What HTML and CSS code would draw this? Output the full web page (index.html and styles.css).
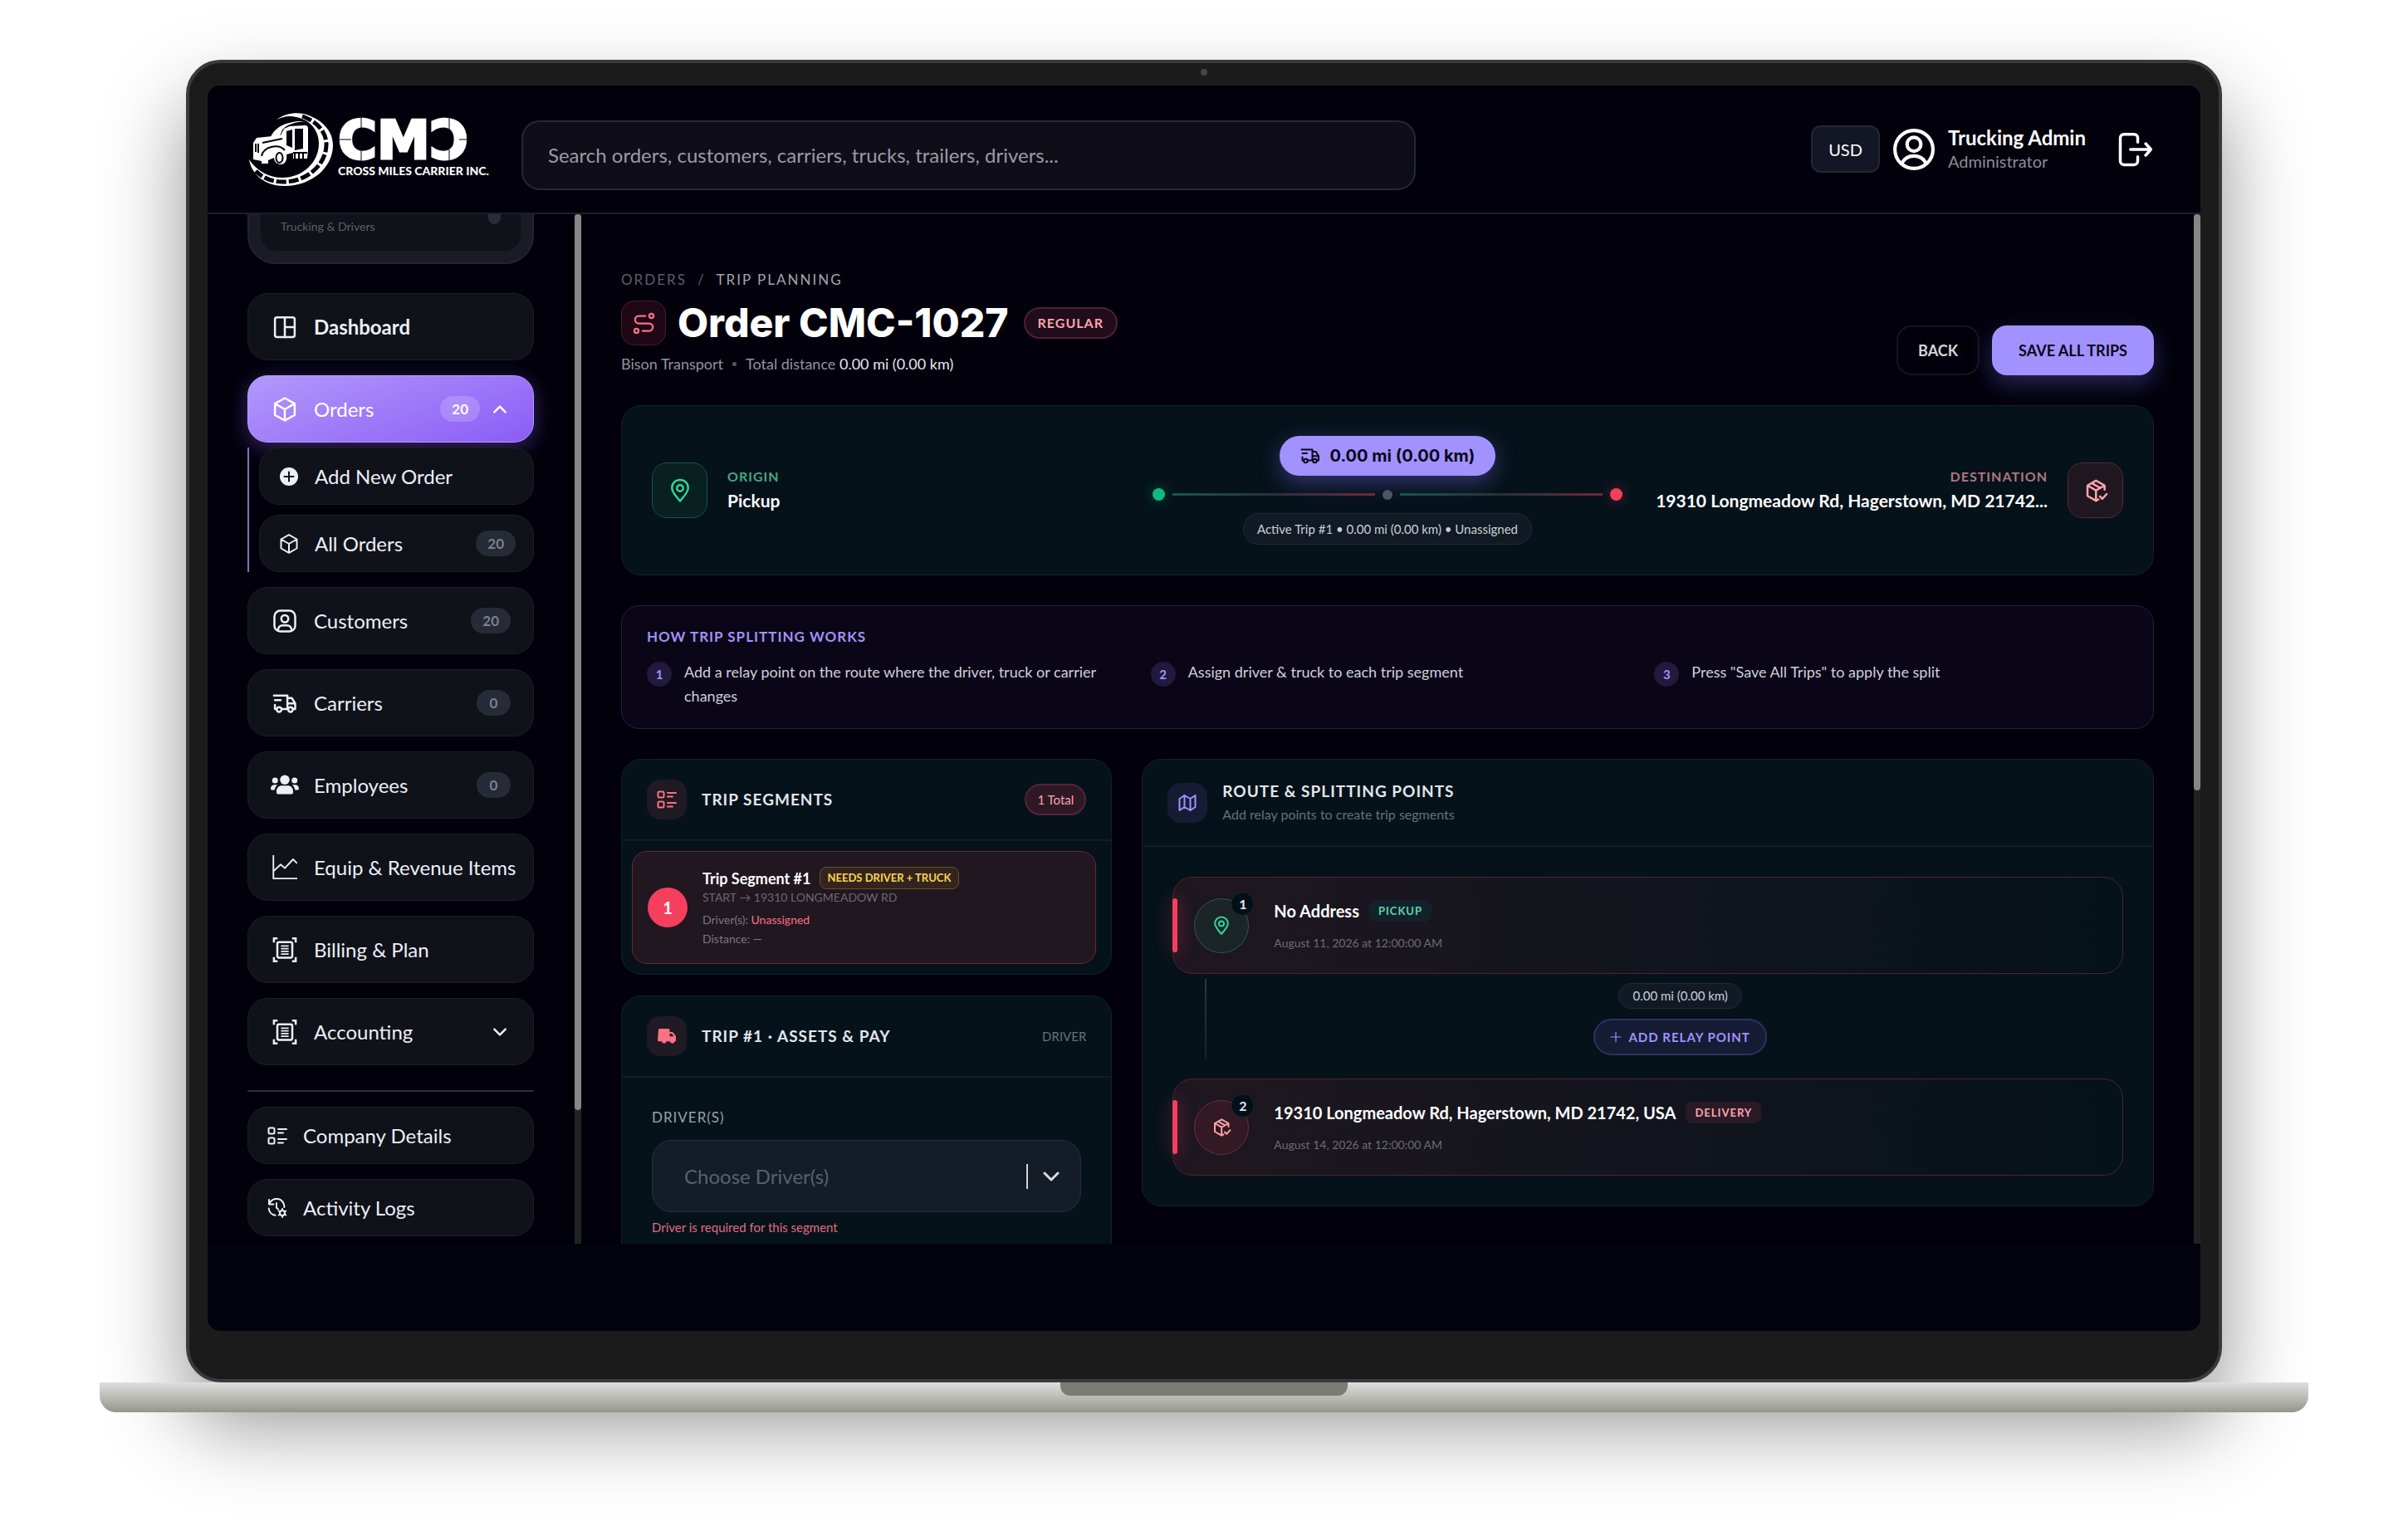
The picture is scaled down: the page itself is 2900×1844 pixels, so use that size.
FILE: index.html
```html
<!DOCTYPE html>
<html lang="en">

<head>
    <meta charset="UTF-8">
    <meta name="viewport" content="width=device-width, initial-scale=1.0">
    <title>Order CMC-1027 - Trip Planning</title>
    <link rel="stylesheet" href="styles.css">
</head>

<body>

    <!-- Icon set -->
    <svg class="icon-defs" aria-hidden="true">
        <symbol id="i-dashboard" viewBox="0 0 24 24"><rect x="2.500" y="2.500" width="19" height="19" rx="2"/><path d="M12 2.500v19M12 12h9.500"/></symbol>
        <symbol id="i-box" viewBox="0 0 24 24"><path d="M12 1.200l9.500 5.300v11l-9.500 5.300-9.500-5.300v-11zM2.500 6.500l9.500 5.500 9.500-5.500M12 12v10.800"/></symbol>
        <symbol id="i-user-square" viewBox="0 0 24 24"><rect x="2" y="2" width="20" height="20" rx="5.500"/><circle cx="12" cy="9.800" r="3.400"/><path d="M5.500 20.800c0-3 2-4.600 4.500-4.600h4c2.500 0 4.500 1.600 4.500 4.600"/></symbol>
        <symbol id="i-truck" viewBox="0 0 24 24"><path d="M1.500 4.500H14.500V17.500M14.500 7h4.200l3.300 5.200v5.300h-2.300M15.200 17.500H9M3.300 17.500H2.500V13.500M2.500 9h5.500M14.500 12.200H22"/><circle cx="6.500" cy="18" r="2.300"/><circle cx="17.500" cy="18" r="2.300"/></symbol>
        <symbol id="i-users" viewBox="0 0 28 24"><g fill="currentColor" stroke="none"><circle cx="14" cy="6.500" r="4.700"/><circle cx="4.300" cy="7" r="2.900"/><circle cx="23.700" cy="7" r="2.900"/><path d="M5.700 18.500c0-4 2.300-6.200 5.300-6.200h6c3 0 5.300 2.200 5.300 6.200 0 1.400-.7 2.200-2 2.200H7.700c-1.300 0-2-.8-2-2.200zM0 15.300c0-2.400 1.500-4 3.800-4h3c-1.700 1.300-2.600 3-2.900 5.200H1.200c-.8 0-1.200-.4-1.200-1.200zM28 15.300c0-2.400-1.500-4-3.800-4h-3c1.700 1.300 2.600 3 2.900 5.200h2.700c.8 0 1.200-.4 1.200-1.200z"/></g></symbol>
        <symbol id="i-chart" viewBox="0 0 24 24"><path d="M1 0v22.500h23M1 15.500l7-6.500 4 3.500 8-8.500 3.500 3.500"/></symbol>
        <symbol id="i-bill" viewBox="0 0 24 24"><path d="M1.500 5V1H5M19 1h3.500v4M22.500 19v4H19M5 23H1.500v-4" stroke-linecap="butt" stroke-linejoin="miter"/><rect x="4.800" y="4.500" width="14.400" height="15" rx="1.500"/><path d="M8.300 8.300h7.400M8.300 10.900h7.400M8.300 13.500h7.400M8.300 16.100h7.400" stroke-width="1.500" stroke-linecap="butt"/></symbol>
        <symbol id="i-list" viewBox="0 0 24 24"><rect x="1.500" y="2.500" width="7" height="7" rx="1.500"/><rect x="1.500" y="14.500" width="7" height="7" rx="1.500"/><path d="M13 4h10M13 8.500h6M13 16h10M13 20.500h6"/></symbol>
        <symbol id="i-history" viewBox="0 0 24 24"><path d="M2 2v5.500h5.500M2.200 7.300A9.300 9.300 0 0 1 20.300 11M1.700 12.500a9.300 9.300 0 0 0 7.800 8.300M11 6v5.500l2 2"/><circle cx="18" cy="18" r="3"/><path d="M18 13v2M18 21v2M22.300 15.500l-1.700 1M15.400 19.500l-1.700 1M13.700 15.500l1.700 1M20.600 19.500l1.700 1"/></symbol>
        <symbol id="i-route" viewBox="0 0 24 24"><circle cx="4" cy="20" r="2.300"/><circle cx="20" cy="4" r="2.300"/><path d="M10.500 20h7a4 4 0 0 0 0-8h-11a4 4 0 0 1 0-8h7"/></symbol>
        <symbol id="i-pin" viewBox="0 0 24 24"><path d="M12 22C8 17 4.200 13.500 4.200 9.300a7.800 7.800 0 0 1 15.600 0C19.800 13.500 16 17 12 22z"/><circle cx="12" cy="9.500" r="3"/></symbol>
        <symbol id="i-package" viewBox="0 0 24 24"><path d="M20.500 11V7l-8.300-4.700L4 7v10l8.200 4.700M4 7l8.200 4.700L20.500 7M12.200 11.700v10M8 4.700l8.300 4.700M12.200 21.700l2.300-1.300M16 17.500l2.300 2.300 4.200-4.600"/></symbol>
        <symbol id="i-map" viewBox="0 0 24 24"><path d="M2.500 7l6-4 7 4 6-4v14l-6 4-7-4-6 4zM8.500 3v14M15.500 7v14"/></symbol>
        <symbol id="i-truck-fill" viewBox="0 0 24 24"><path d="M2 4.500C2 3.700 2.700 3 3.500 3H14c.8 0 1.500.7 1.500 1.500V7h2.700c.6 0 1 .2 1.400.6l2.900 3.600c.3.400.5.800.5 1.300V17c0 .8-.5 1.300-1.300 1.300a3 3 0 0 1-5.900 0h-4.100a3 3 0 0 1-5.900 0H2.800C2.200 18.300 1 18 1 17zM15.500 9v3.200h5L18 9z" fill="currentColor" stroke="none" fill-rule="evenodd"/></symbol>
        <symbol id="i-user" viewBox="0 0 24 24"><circle cx="12" cy="12" r="11"/><circle cx="12" cy="9" r="4"/><path d="M5 20c1.500-3 4-4.200 7-4.200s5.500 1.200 7 4.200"/></symbol>
        <symbol id="i-logout" viewBox="0 0 24 24"><path d="M14 7V4a2.500 2.500 0 0 0-2.500-2.500h-7A2.500 2.500 0 0 0 2 4v16a2.500 2.500 0 0 0 2.500 2.500h7A2.500 2.500 0 0 0 14 20v-3M9 12h14M19.500 8L23 12l-3.500 4"/></symbol>
        <symbol id="i-down" viewBox="0 0 24 24"><path d="M4 8l8 8 8-8"/></symbol>
        <symbol id="i-up" viewBox="0 0 24 24"><path d="M4 16l8-8 8 8"/></symbol>
        <symbol id="i-plus" viewBox="0 0 24 24"><path d="M12 2v20M2 12h20"/></symbol>
        <symbol id="i-plus-circle" viewBox="0 0 24 24"><circle cx="12" cy="12" r="11" fill="currentColor" stroke="none"/><path d="M12 6.500v11M6.500 12h11" stroke="#0f1219"/></symbol>
    </svg>

    <div class="laptop">
        <div class="lid">
            <span class="camera"></span>
            <div class="screen">

                <header class="topbar">
                    <a class="brand" href="#">
                        <svg class="brand-emblem" viewBox="0 0 101 88">
                            <path fill="#fff" d="M33 8C44 0 60-2 72 3c18 7 29 20 29 36 0 27-26 49-58 49C20 88 3 75 0 56c9 14 24 22 40 22 25 0 44-19 44-41C84 18 70 5 49 4c-6 0-11 2-16 4z"/>
                            <path fill="none" stroke="#02000b" stroke-width="5" stroke-dasharray="12 3" d="M64 4c17 6 29 18 29 34 0 24-23 45-52 45-14 0-25-5-33-13"/>
                            <path fill="#fff" d="M26 29c5-12 20-20 42-19-14 1-22 4-28 10l-3 8z"/>
                            <path fill="#fff" d="M5 36l4-6 29-3 4-8 7-3 18-1c3 0 4 1 4 4v26l-1 10H53V48l-8 2c1 6-1 12-7 12-5 0-8-4-8-8l-7 3v4h-8v-3l-10-2z"/>
                            <path fill="none" stroke="#02000b" stroke-width="2" d="M8 37v10M11 37v11M16 36l24-5M15 52c2-11 20-16 28-7M53 48h17M55 49v8M60 49v8M65 48v8"/>
                            <path fill="#02000b" d="M45 22l7-2v22l-7-3zM55 19h10v24l-10 2z"/>
                            <ellipse cx="36.500" cy="54" rx="4" ry="6" fill="none" stroke="#02000b" stroke-width="2"/>
                        </svg>
                        <span class="brand-text">
                            <svg class="brand-name" viewBox="0 0 178 50">
                                <text x="0" y="46">CMƆ</text>
                                <path d="M28 -4v16M28 35v16M0 23h16M134 -4v16M134 35v16M146 23h18"/>
                            </svg>
                            <span class="brand-sub">CROSS MILES CARRIER INC.</span>
                        </span>
                    </a>
                    <input class="search" type="text" aria-label="Search" placeholder="Search orders, customers, carriers, trucks, trailers, drivers...">
                    <div class="account">
                        <button class="currency">USD</button>
                        <svg class="icon avatar"><use href="#i-user"/></svg>
                        <div class="account-info">
                            <strong>Trucking Admin</strong>
                            <span>Administrator</span>
                        </div>
                        <button class="logout" aria-label="Log out"><svg class="icon"><use href="#i-logout"/></svg></button>
                    </div>
                </header>

                <div class="app">
                    <aside class="sidebar">
                        <div class="switcher">
                            <div class="switcher-inner">
                                <span>Trucking &amp; Drivers</span>
                                <i class="switcher-dot"></i>
                            </div>
                        </div>

                        <nav class="menu">
                            <a class="item strong" href="#"><svg class="icon"><use href="#i-dashboard"/></svg>Dashboard</a>
                            <div class="group">
                                <a class="item active" href="#"><svg class="icon"><use href="#i-box"/></svg>Orders<span class="count">20</span><svg class="icon caret"><use href="#i-up"/></svg></a>
                                <div class="submenu">
                                    <a class="item small" href="#"><svg class="icon"><use href="#i-plus-circle"/></svg>Add New Order</a>
                                    <a class="item small" href="#"><svg class="icon"><use href="#i-box"/></svg>All Orders<span class="count">20</span></a>
                                </div>
                            </div>
                            <a class="item" href="#"><svg class="icon"><use href="#i-user-square"/></svg>Customers<span class="count">20</span></a>
                            <a class="item" href="#"><svg class="icon"><use href="#i-truck"/></svg>Carriers<span class="count">0</span></a>
                            <a class="item" href="#"><svg class="icon wide"><use href="#i-users"/></svg>Employees<span class="count">0</span></a>
                            <a class="item" href="#"><svg class="icon thin"><use href="#i-chart"/></svg>Equip &amp; Revenue Items</a>
                            <a class="item" href="#"><svg class="icon"><use href="#i-bill"/></svg>Billing &amp; Plan</a>
                            <a class="item" href="#"><svg class="icon"><use href="#i-bill"/></svg>Accounting<svg class="icon caret"><use href="#i-down"/></svg></a>
                        </nav>

                        <nav class="menu menu-bottom">
                            <a class="item small" href="#"><svg class="icon"><use href="#i-list"/></svg>Company Details</a>
                            <a class="item small" href="#"><svg class="icon"><use href="#i-history"/></svg>Activity Logs</a>
                        </nav>
                    </aside>
                    <div class="scrollbar"><div class="thumb" style="height: 87%"></div></div>

                    <main class="content">
                        <div class="page-head">
                            <div>
                                <div class="breadcrumb"><a href="#">Orders</a><span>/</span><b>Trip Planning</b></div>
                                <div class="title-row">
                                    <span class="title-icon"><svg class="icon"><use href="#i-route"/></svg></span>
                                    <h1>Order CMC-1027</h1>
                                    <span class="tag-regular">REGULAR</span>
                                </div>
                                <p class="meta">Bison Transport<i></i>Total distance&nbsp;<b>0.00 mi (0.00 km)</b></p>
                            </div>
                            <div class="actions">
                                <button class="btn">BACK</button>
                                <button class="btn btn-primary">SAVE ALL TRIPS</button>
                            </div>
                        </div>

                        <section class="card overview">
                            <div class="place">
                                <span class="place-icon green"><svg class="icon"><use href="#i-pin"/></svg></span>
                                <div>
                                    <div class="place-label">ORIGIN</div>
                                    <div class="place-name">Pickup</div>
                                </div>
                            </div>
                            <div class="track">
                                <span class="track-distance"><svg class="icon"><use href="#i-truck"/></svg>0.00 mi (0.00 km)</span>
                                <div class="track-line"><i class="dot start"></i><i class="line"></i><i class="dot mid"></i><i class="line"></i><i class="dot end"></i></div>
                                <span class="pill">Active Trip #1 • 0.00 mi (0.00 km) • Unassigned</span>
                            </div>
                            <div class="place destination">
                                <div>
                                    <div class="place-label">DESTINATION</div>
                                    <div class="place-name">19310 Longmeadow Rd, Hagerstown, MD 21742...</div>
                                </div>
                                <span class="place-icon red"><svg class="icon"><use href="#i-package"/></svg></span>
                            </div>
                        </section>

                        <section class="howto">
                            <h2>HOW TRIP SPLITTING WORKS</h2>
                            <ol>
                                <li><span>1</span>Add a relay point on the route where the driver, truck or carrier changes</li>
                                <li><span>2</span>Assign driver &amp; truck to each trip segment</li>
                                <li><span>3</span>Press "Save All Trips" to apply the split</li>
                            </ol>
                        </section>

                        <div class="columns">
                            <div class="col-left">
                                <section class="card">
                                    <div class="card-head">
                                        <span class="card-icon pink"><svg class="icon"><use href="#i-list"/></svg></span>
                                        <h3>TRIP SEGMENTS</h3>
                                        <span class="total">1 Total</span>
                                    </div>
                                    <div class="segments">
                                        <div class="segment">
                                            <span class="segment-number">1</span>
                                            <div>
                                                <div class="segment-title">Trip Segment #1<span>NEEDS DRIVER + TRUCK</span></div>
                                                <div class="segment-route">START → 19310 LONGMEADOW RD</div>
                                                <div class="segment-info">Driver(s): <b>Unassigned</b></div>
                                                <div class="segment-info">Distance: —</div>
                                            </div>
                                        </div>
                                    </div>
                                </section>

                                <section class="card">
                                    <div class="card-head">
                                        <span class="card-icon pink"><svg class="icon"><use href="#i-truck-fill"/></svg></span>
                                        <h3>TRIP #1 · ASSETS &amp; PAY</h3>
                                        <span class="card-note">DRIVER</span>
                                    </div>
                                    <div class="form">
                                        <label for="drivers">DRIVER(S)</label>
                                        <div class="select-box">
                                            <select id="drivers">
                                                <option>Choose Driver(s)</option>
                                            </select>
                                            <span class="select-arrow"><svg class="icon"><use href="#i-down"/></svg></span>
                                        </div>
                                        <p class="error">Driver is required for this segment</p>
                                    </div>
                                </section>
                            </div>

                            <section class="card col-right">
                                <div class="card-head">
                                    <span class="card-icon violet"><svg class="icon"><use href="#i-map"/></svg></span>
                                    <div>
                                        <h3>ROUTE &amp; SPLITTING POINTS</h3>
                                        <p>Add relay points to create trip segments</p>
                                    </div>
                                </div>
                                <div class="stops">
                                    <div class="stop">
                                        <span class="stop-icon green"><svg class="icon"><use href="#i-pin"/></svg><b>1</b></span>
                                        <div>
                                            <div class="stop-title">No Address<span class="green">PICKUP</span></div>
                                            <div class="stop-date">August 11, 2026 at 12:00:00 AM</div>
                                        </div>
                                    </div>
                                    <div class="connector">
                                        <i class="connector-line"></i>
                                        <div class="connector-body">
                                            <span class="pill pill-small">0.00 mi (0.00 km)</span>
                                            <button class="add-relay"><svg class="icon"><use href="#i-plus"/></svg>ADD RELAY POINT</button>
                                        </div>
                                    </div>
                                    <div class="stop">
                                        <span class="stop-icon red"><svg class="icon"><use href="#i-package"/></svg><b>2</b></span>
                                        <div>
                                            <div class="stop-title">19310 Longmeadow Rd, Hagerstown, MD 21742, USA<span class="red">DELIVERY</span></div>
                                            <div class="stop-date">August 14, 2026 at 12:00:00 AM</div>
                                        </div>
                                    </div>
                                </div>
                            </section>
                        </div>
                    </main>
                    <div class="scrollbar"><div class="thumb" style="height: 56%"></div></div>
                </div>

            </div>
        </div>
        <div class="base"><div class="notch"></div></div>
    </div>

</body>

</html>
```

FILE: styles.css
```css
* {
    box-sizing: border-box;
}

body {
    margin: 0;
    padding: 72px 120px 144px;
    background: #fff;
    font-family: Lato, sans-serif;
    color: #fff;
}

h1, h2, h3, p, ol {
    margin: 0;
    padding: 0;
}

a {
    color: inherit;
    text-decoration: none;
}

button {
    font-family: inherit;
    cursor: pointer;
}

.icon-defs {
    position: absolute;
    width: 0;
    height: 0;
}

.icon {
    width: 24px;
    height: 24px;
    flex: none;
    fill: none;
    stroke: currentColor;
    stroke-width: 2;
    stroke-linecap: round;
    stroke-linejoin: round;
}

/* Laptop frame */
.lid {
    margin: 0 104px;
    padding: 7px 22px 58px;
    border: 4px solid #3a3a3c;
    border-radius: 42px;
    background: #1b1b1c;
    box-shadow: 0 50px 100px rgba(0, 0, 0, 0.43);
}

.camera {
    display: block;
    width: 8px;
    height: 8px;
    margin: 0 auto 12px;
    border-radius: 50%;
    background: #454547;
}

.screen {
    display: flex;
    flex-direction: column;
    aspect-ratio: 8 / 5;
    padding-bottom: 105px;
    border-radius: 15px;
    background: #02030f;
    overflow: hidden;
}

.base {
    position: relative;
    height: 36px;
    border-radius: 0 0 20px 20px;
    background: linear-gradient(#dfdfde, #b6b8b1 55%, #94958d);
}

.notch {
    width: 13%;
    height: 16px;
    margin: 0 auto;
    border-radius: 0 0 12px 12px;
    background: #7b7c76;
}

/* Top bar */
.topbar {
    display: flex;
    align-items: center;
    flex: none;
    height: 155px;
    padding: 0 58px 0 50px;
    background: #02000b;
    border-bottom: 2px solid #1c1d2b;
}

.brand {
    display: flex;
    align-items: center;
    gap: 6px;
    flex: none;
    width: 285px;
    margin-right: 43px;
}

.brand-emblem {
    width: 101px;
    height: 88px;
    flex: none;
}

.brand-text {
    display: flex;
    flex-direction: column;
    white-space: nowrap;
}

.brand-name {
    width: 178px;
    height: 52px;
    overflow: visible;
    font-family: "DejaVu Sans", sans-serif;
    font-size: 64px;
    font-weight: bold;
    fill: #fff;
    stroke: #fff;
    stroke-width: 3px;
}

.brand-name path {
    fill: none;
    stroke: #02000b;
    stroke-width: 1px;
}

.brand-sub {
    font-size: 14px;
    font-weight: 900;
    line-height: 20px;
}

.search {
    flex: 0 1 47%;
    height: 84px;
    margin-top: 14px;
    padding: 0 30px;
    border: 2px solid #272837;
    border-radius: 22px;
    background: #0f0d17;
    font-family: inherit;
    font-size: 24px;
    color: #fff;
}

.search::placeholder {
    color: #9a9ba5;
}

.account {
    display: flex;
    align-items: center;
    margin-left: auto;
}

.currency {
    width: 83px;
    height: 57px;
    border: 2px solid #242634;
    border-radius: 12px;
    background: #131624;
    font-size: 20px;
    color: #fff;
}

.avatar {
    width: 50px;
    height: 50px;
    margin: 0 16px;
}

.account-info {
    display: flex;
    flex-direction: column;
    line-height: 28px;
}

.account-info strong {
    font-size: 24px;
}

.account-info span {
    font-size: 20px;
    color: #8b8c96;
}

.logout {
    margin-left: 38px;
    padding: 0;
    border: none;
    background: none;
    color: #fff;
}

.logout .icon {
    display: block;
    width: 42px;
    height: 42px;
}

.app {
    display: flex;
    flex: 1;
    min-height: 0;
    background: #02000b;
}

.scrollbar {
    flex: none;
    width: 8px;
    background: #222223;
}

.thumb {
    border-radius: 4px;
    background: #868686;
}

/* Sidebar */
.sidebar {
    flex: none;
    width: 442px;
    padding: 0 49px 0 48px;
    overflow: hidden;
}

.switcher {
    padding: 0 14px 14px;
    border: 2px solid #23242e;
    border-top: none;
    border-radius: 0 0 34px 34px;
    background: #191b25;
}

.switcher-inner {
    display: flex;
    justify-content: space-between;
    height: 44px;
    padding: 0 24px;
    border-radius: 0 0 20px 20px;
    background: #0f1219;
    font-size: 14px;
    line-height: 30px;
    color: #5d5f69;
}

.switcher-dot {
    width: 15px;
    height: 12px;
    border-radius: 0 0 8px 8px;
    background: #282b38;
}

.menu {
    display: flex;
    flex-direction: column;
    gap: 18px;
    padding-top: 35px;
}

.menu-bottom {
    margin-top: 30px;
    padding-top: 18px;
    border-top: 2px solid #2b2e3b;
}

.item {
    display: flex;
    align-items: center;
    height: 81px;
    padding: 0 27px 0 29px;
    border: 1px solid #1e1d26;
    border-radius: 24px;
    background: #0f1219;
    font-size: 24px;
    color: #eeeef8;
    white-space: nowrap;
}

.item .icon {
    width: 30px;
    height: 30px;
    margin-right: 20px;
}

.item .wide {
    width: 34px;
    margin: 0 18px 0 -2px;
}

.item .thin {
    stroke-width: 1.5px;
}

.item .caret {
    width: 20px;
    height: 20px;
    margin: 0 3px 0 auto;
    stroke-width: 3;
}

.strong {
    font-weight: bold;
}

.small {
    height: 69px;
    padding: 0 21px 0 23px;
}

.small .icon {
    width: 24px;
    height: 24px;
    margin-right: 19px;
}

.active {
    border-color: #b49cff;
    background: linear-gradient(160deg, #b299fb, #8b5cf6);
    box-shadow: 0 6px 24px rgba(139, 92, 246, 0.4);
    color: #fff;
}

.count {
    min-width: 41px;
    height: 31px;
    margin-left: auto;
    padding: 0 14px;
    border-radius: 16px;
    background: #262b37;
    font-size: 17px;
    font-weight: bold;
    line-height: 31px;
    text-align: center;
    color: #7d818d;
}

.active .count {
    background: rgba(255, 255, 255, 0.18);
    color: #fff;
}

.active .caret {
    margin-left: 14px;
}

.submenu {
    display: flex;
    flex-direction: column;
    gap: 12px;
    margin-top: 6px;
    padding-left: 12px;
    border-left: 2px solid #7f70c4;
}

/* Page */
.content {
    flex: 1;
    min-width: 0;
    padding: 67px 48px 0;
    overflow: hidden;
}

.page-head {
    display: flex;
    justify-content: space-between;
    align-items: flex-end;
    margin-bottom: 36px;
}

.breadcrumb {
    display: flex;
    gap: 13px;
    font-size: 17px;
    line-height: 24px;
    letter-spacing: 2px;
    text-transform: uppercase;
    color: #5d5e69;
}

.breadcrumb b {
    font-weight: normal;
    color: #a3a4ae;
}

.title-row {
    display: flex;
    align-items: center;
    margin: 13px 0 8px;
}

.title-icon {
    display: flex;
    align-items: center;
    justify-content: center;
    width: 54px;
    height: 54px;
    border: 1px solid #4a1a2c;
    border-radius: 16px;
    background: #1e0815;
    color: #fb7185;
}

.title-icon .icon {
    width: 27px;
    height: 27px;
}

h1 {
    margin: 0 18px 0 14px;
    font-family: Inter, sans-serif;
    font-size: 48px;
    font-weight: 800;
    line-height: 54px;
}

.tag-regular {
    height: 38px;
    padding: 0 15px;
    border: 2px solid #4b2236;
    border-radius: 19px;
    background: #200c1b;
    font-size: 16px;
    font-weight: bold;
    line-height: 34px;
    letter-spacing: 1px;
    color: #fda4af;
}

.meta {
    display: flex;
    align-items: center;
    font-size: 18px;
    line-height: 28px;
    color: #9293a0;
}

.meta i {
    width: 5px;
    height: 5px;
    margin: 0 11px;
    border-radius: 50%;
    background: #555762;
}

.meta b {
    font-weight: normal;
    color: #e6e6f0;
}

.actions {
    display: flex;
    gap: 15px;
}

.btn {
    height: 60px;
    padding: 0 24px;
    border: 2px solid #15151f;
    border-radius: 18px;
    background: #02000b;
    font-size: 18px;
    font-weight: bold;
    color: #d3d4dd;
}

.btn-primary {
    padding: 0 30px;
    border-color: #a292ff;
    background: #a292ff;
    box-shadow: 0 10px 28px rgba(124, 106, 240, 0.35);
    color: #0a0618;
}

.card {
    border: 1px solid #13212a;
    border-radius: 24px;
    background: #05121a;
}

.overview {
    display: grid;
    grid-template-columns: repeat(3, minmax(0, 1fr));
    gap: 36px;
    align-items: center;
    padding: 36px;
}

.place {
    display: flex;
    align-items: center;
    gap: 24px;
    white-space: nowrap;
}

.destination {
    justify-content: flex-end;
    text-align: right;
}

.place-icon {
    display: flex;
    align-items: center;
    justify-content: center;
    flex: none;
    width: 67px;
    height: 67px;
    border: 1px solid #1d4f45;
    border-radius: 18px;
    background: #08201f;
    color: #34d399;
}

.place-icon .icon {
    width: 30px;
    height: 30px;
}

.place-icon.red {
    border-color: #54283a;
    background: #1f1720;
    color: #fda4af;
}

.place-label {
    font-size: 16px;
    font-weight: bold;
    line-height: 24px;
    letter-spacing: 1px;
    color: #45a583;
}

.destination .place-label {
    color: #b27581;
}

.place-name {
    font-size: 21px;
    font-weight: bold;
    line-height: 34px;
}

.track {
    display: flex;
    flex-direction: column;
    align-items: center;
    gap: 15px;
}

.track-distance {
    display: flex;
    align-items: center;
    gap: 12px;
    height: 48px;
    padding: 0 25px;
    border-radius: 24px;
    background: #a292ff;
    box-shadow: 0 8px 26px rgba(124, 106, 240, 0.4);
    font-family: Inter, sans-serif;
    font-size: 20px;
    font-weight: bold;
    color: #0a0618;
}

.track-line {
    display: flex;
    align-items: center;
    gap: 9px;
    width: 100%;
}

.dot {
    width: 15px;
    height: 15px;
    border-radius: 50%;
}

.start {
    background: #10b981;
    box-shadow: 0 0 16px rgba(16, 185, 129, 0.4);
}

.mid {
    width: 12px;
    height: 12px;
    background: #4b5563;
}

.end {
    background: #f43f5e;
    box-shadow: 0 0 16px rgba(244, 63, 94, 0.4);
}

.line {
    flex: 1;
    height: 3px;
    background: linear-gradient(to right, #14594d, #2b3039 50%, #6b2a3b);
}

.pill {
    height: 38px;
    padding: 0 16px;
    border: 1px solid #1f2b35;
    border-radius: 19px;
    background: #111924;
    font-size: 15px;
    line-height: 36px;
    white-space: nowrap;
    color: #ccd1d6;
}

.howto {
    margin: 36px 0;
    padding: 24px 30px;
    border: 1px solid #272044;
    border-radius: 22px;
    background: #0a0617;
}

.howto h2 {
    margin-bottom: 16px;
    font-size: 17px;
    font-weight: bold;
    line-height: 25px;
    letter-spacing: 1px;
    color: #a292f5;
}

.howto ol {
    display: grid;
    grid-template-columns: repeat(3, minmax(0, 1fr));
    gap: 36px;
    list-style: none;
}

.howto li {
    display: flex;
    align-items: flex-start;
    gap: 15px;
    font-size: 18px;
    line-height: 29px;
    color: #d0cfdb;
}

.howto li span {
    flex: none;
    width: 30px;
    height: 30px;
    margin-top: 2px;
    border-radius: 50%;
    background: #211a3d;
    font-size: 15px;
    font-weight: bold;
    line-height: 30px;
    text-align: center;
    color: #a292ff;
}

.columns {
    display: grid;
    grid-template-columns: repeat(12, minmax(0, 1fr));
    gap: 36px;
    align-items: start;
}

.col-left {
    grid-column: span 4;
    display: flex;
    flex-direction: column;
    gap: 25px;
}

.col-right {
    grid-column: span 8;
}

.card-head {
    display: flex;
    align-items: center;
    gap: 18px;
    padding: 24px 30px;
    border-bottom: 2px solid #101d26;
}

.card-icon {
    display: flex;
    align-items: center;
    justify-content: center;
    width: 48px;
    height: 48px;
    border-radius: 16px;
    background: #1f1a24;
    color: #fb7185;
}

.card-icon.violet {
    background: #171c35;
    color: #a292ff;
}

.card-head h3 {
    font-size: 19px;
    font-weight: bold;
    line-height: 28px;
    letter-spacing: 1px;
    color: #e2e6ea;
}

.card-head p {
    font-size: 16px;
    line-height: 27px;
    color: #66717a;
}

.total {
    height: 38px;
    margin-left: auto;
    padding: 0 13px;
    border: 2px solid #55233a;
    border-radius: 19px;
    background: #2d1824;
    font-size: 15px;
    line-height: 34px;
    color: #fda4af;
}

.card-note {
    margin-left: auto;
    font-size: 15px;
    color: #66717a;
}

.segments {
    padding: 12px 18px 12px 12px;
}

.segment {
    display: flex;
    align-items: center;
    gap: 18px;
    padding: 18px;
    border: 1px solid #6d2639;
    border-radius: 18px;
    background: #211720;
}

.segment-number {
    width: 48px;
    height: 48px;
    border-radius: 50%;
    background: #f43f5e;
    font-size: 20px;
    font-weight: bold;
    line-height: 48px;
    text-align: center;
}

.segment-title {
    display: flex;
    align-items: center;
    gap: 10px;
    font-size: 18px;
    font-weight: bold;
}

.segment-title span {
    padding: 0 9px;
    border: 1px solid #6b4f22;
    border-radius: 8px;
    background: #33241f;
    font-size: 13px;
    line-height: 25px;
    color: #fcd34d;
}

.segment-route {
    margin-bottom: 5px;
    font-size: 14px;
    line-height: 20px;
    color: #696a74;
}

.segment-info {
    font-size: 14px;
    line-height: 23px;
    color: #7b7681;
}

.segment-info b {
    font-weight: normal;
    color: #fb7185;
}

.form {
    padding: 36px;
}

.form label {
    display: block;
    margin-bottom: 15px;
    font-size: 17px;
    line-height: 24px;
    letter-spacing: 1px;
    color: #9aa2aa;
}

.select-box {
    position: relative;
}

select {
    appearance: none;
    display: block;
    width: 100%;
    height: 87px;
    padding: 0 38px;
    border: 1px solid #22323e;
    border-radius: 24px;
    background: #131c27;
    font-family: inherit;
    font-size: 24px;
    color: #59606e;
}

.select-arrow {
    position: absolute;
    top: 29px;
    right: 24px;
    display: flex;
    align-items: center;
    height: 30px;
    padding-left: 16px;
    border-left: 2px solid #d5d5d5;
    color: #dcdcdc;
    pointer-events: none;
}

.select-arrow .icon {
    stroke-width: 3;
}

.error {
    margin-top: 6px;
    font-size: 15px;
    line-height: 24px;
    color: #e06c80;
}

.stops {
    padding: 36px;
}

.stop {
    position: relative;
    display: flex;
    align-items: center;
    gap: 30px;
    height: 117px;
    padding: 0 25px;
    border: 1px solid #53202f;
    border-radius: 24px;
    background: linear-gradient(to right, #1f1720, #05121a);
}

/* Accent bar on the left edge */
.stop::before {
    content: "";
    position: absolute;
    top: 25px;
    bottom: 25px;
    left: -1px;
    width: 6px;
    border-radius: 3px;
    background: #f43f5e;
    box-shadow: 0 0 20px rgba(244, 63, 94, 0.5);
}

.stop-icon {
    position: relative;
    display: flex;
    align-items: center;
    justify-content: center;
    width: 66px;
    height: 66px;
    border: 1px solid #2a5a4a;
    border-radius: 50%;
    background: #1b2527;
    color: #34d399;
}

.stop-icon.red {
    border-color: #6b2e40;
    background: #321924;
    color: #fda4af;
}

.stop-icon b {
    position: absolute;
    top: -9px;
    right: -8px;
    width: 29px;
    height: 29px;
    border: 1px solid #1f2b35;
    border-radius: 50%;
    background: #040f17;
    font-size: 16px;
    line-height: 27px;
    text-align: center;
    color: #e2e6ea;
}

.stop-title {
    display: flex;
    align-items: center;
    gap: 12px;
    margin-bottom: 14px;
    font-size: 20px;
    font-weight: bold;
    line-height: 28px;
}

.stop-title span {
    padding: 0 11px;
    border-radius: 8px;
    background: #13222a;
    font-size: 13px;
    line-height: 26px;
    letter-spacing: 1px;
    color: #5fd3a8;
}

.stop-title .red {
    background: #2a1a26;
    color: #fda4af;
}

.stop-date {
    font-size: 14px;
    line-height: 22px;
    color: #6b6c76;
}

.connector {
    display: flex;
}

.connector-line {
    width: 2px;
    margin: 6px 37px 24px 39px;
    background: linear-gradient(#2c3740, #15232c);
}

.connector-body {
    display: flex;
    flex: 1;
    flex-direction: column;
    align-items: center;
    gap: 12px;
    padding: 11px 0 28px;
}

.pill-small {
    height: 31px;
    line-height: 29px;
}

.add-relay {
    display: flex;
    align-items: center;
    gap: 8px;
    height: 44px;
    padding: 0 18px;
    border: 2px solid #2d3260;
    border-radius: 22px;
    background: #151c33;
    font-size: 15px;
    font-weight: bold;
    letter-spacing: 1px;
    color: #a292ff;
}

.add-relay .icon {
    width: 14px;
    height: 14px;
}
```
